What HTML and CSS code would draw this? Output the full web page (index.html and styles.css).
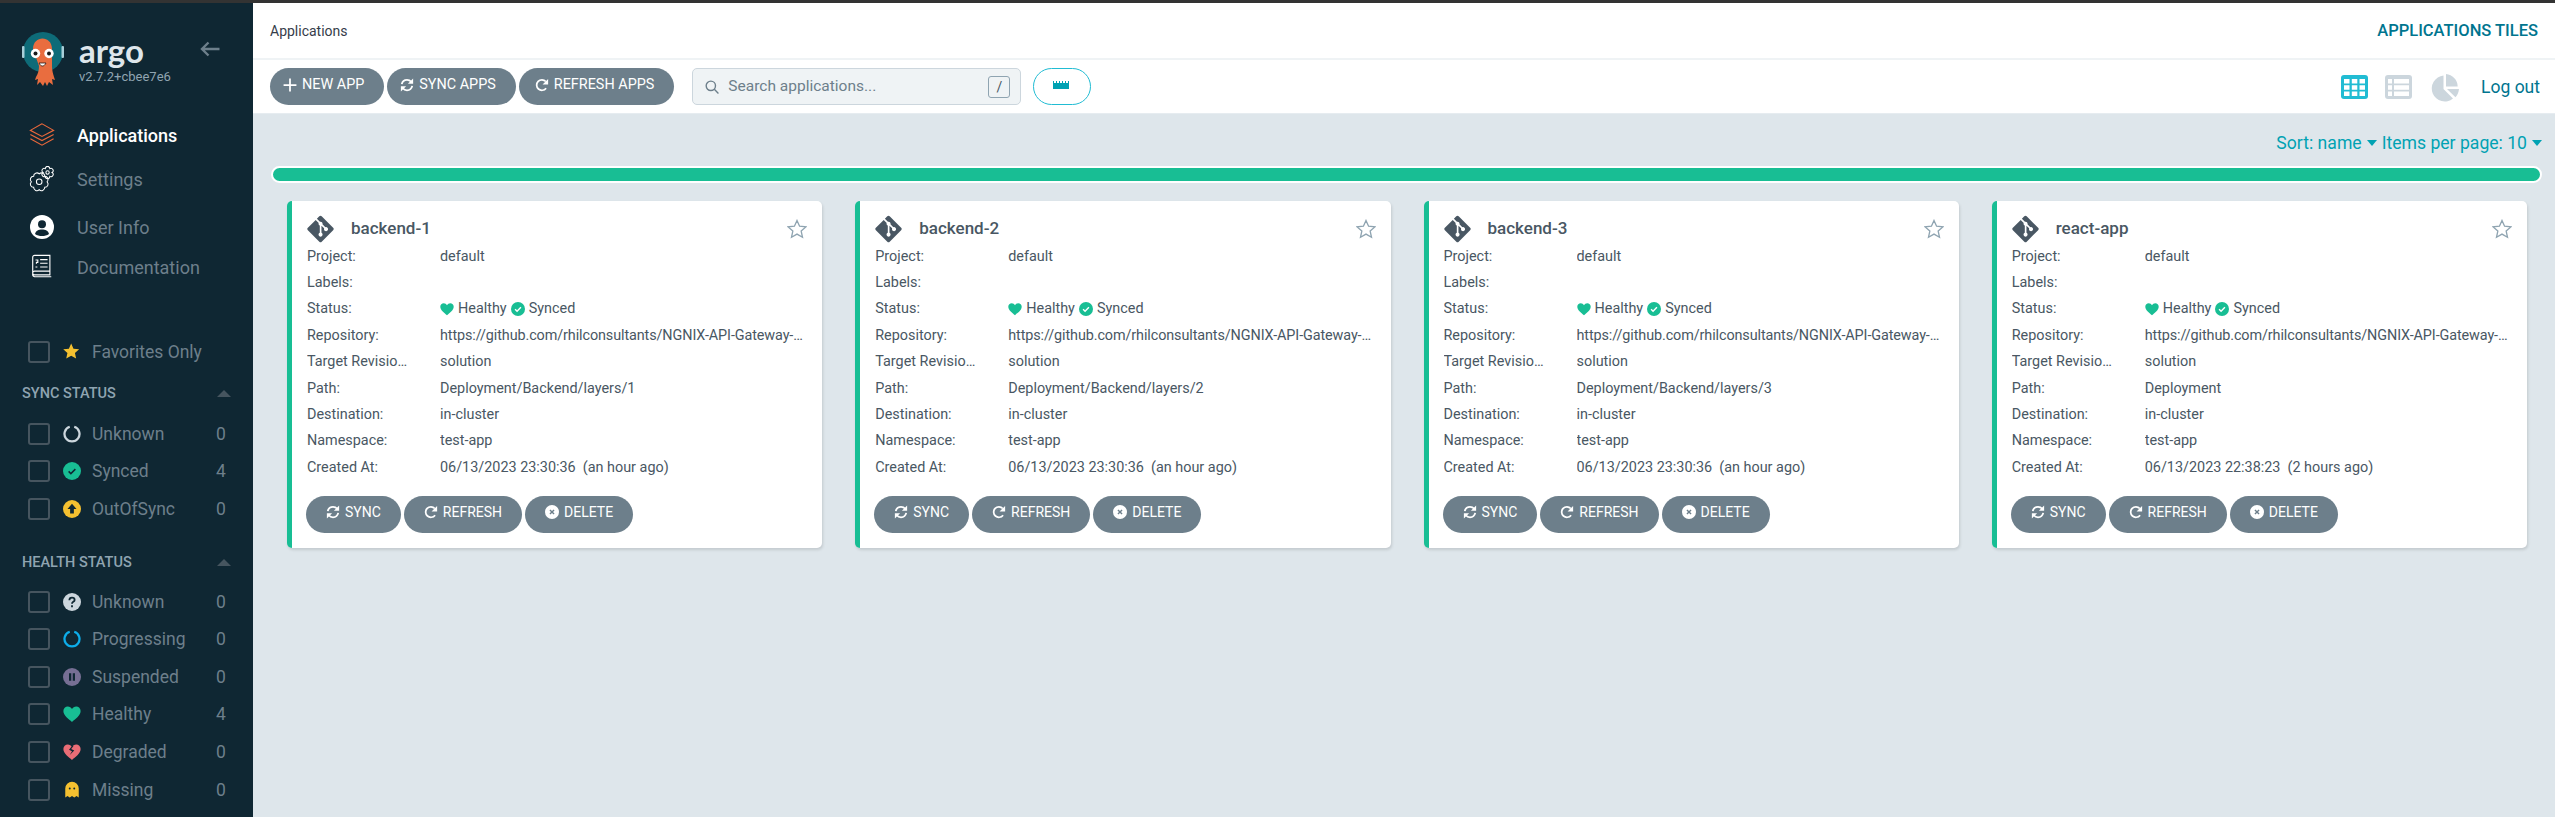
FILE: index.html
```html
<!DOCTYPE html>
<html lang="en">
<head>
    <meta charset="UTF-8">
    <meta name="viewport" content="width=device-width, initial-scale=1.0">
    <title>Applications</title>
    <link rel="stylesheet" href="styles.css">
</head>
<body>

    <svg class="defs" width="0" height="0">
        <symbol id="i-git" viewBox="0 0 448 512"><path d="M439.55 236.05L244 40.45a28.87 28.87 0 0 0-40.81 0l-40.66 40.63 51.52 51.52c27.06-9.14 52.68 16.77 43.39 43.68l49.66 49.66c34.23-11.8 61.18 31 35.47 56.69-26.49 26.49-70.21-2.87-56-37.34L240.22 199v121.85c25.3 12.54 22.26 41.85 9.08 55a34.34 34.34 0 0 1-48.55 0c-17.57-17.6-11.07-46.91 11.25-56v-123c-20.8-8.51-24.6-30.74-18.64-45L142.57 101 8.45 235.14a28.86 28.86 0 0 0 0 40.81l195.61 195.6a28.86 28.86 0 0 0 40.8 0l194.69-194.69a28.86 28.86 0 0 0 0-40.81z"/></symbol>
        <symbol id="i-heart" viewBox="0 0 24 24"><path d="M12 22.5C8 19 .5 14 .5 8 .5 4.5 3.2 2 6.4 2 8.8 2 10.9 3.3 12 5.4 13.100 3.300 15.200 2 17.600 2 20.800 2 23.500 4.500 23.500 8 23.500 14 16 19 12 22.500z"/></symbol>
        <symbol id="i-check" viewBox="0 0 24 24"><circle cx="12" cy="12" r="12"/><path d="M7 12.500l3.400 3.400L17 9" fill="none" stroke="#fff" stroke-width="2.400"/></symbol>
        <symbol id="i-sync" viewBox="0 0 24 24"><g fill="none" stroke="currentColor" stroke-width="3"><path d="M3 10.500C4 6 7.500 3 12 3c3 0 5.500 1.300 7.200 3.500"/><path d="M21 13.500C20 18 16.500 21 12 21c-3 0-5.500-1.300-7.200-3.500"/></g><path fill="currentColor" d="M22.500 1v9h-9zM1.500 23v-9h9z"/></symbol>
        <symbol id="i-redo" viewBox="0 0 24 24"><path fill="none" stroke="currentColor" stroke-width="3" d="M19 17.500A9 9 0 1 1 18.500 6"/><path fill="currentColor" d="M22.500 1.500v9.500h-9.500z"/></symbol>
        <symbol id="i-delete" viewBox="0 0 24 24"><circle cx="12" cy="12" r="12" fill="currentColor"/><path d="M8.500 8.500l7 7M15.500 8.500l-7 7" stroke="#6d7f8b" stroke-width="2.400"/></symbol>
        <symbol id="i-star" viewBox="0 0 24 24"><path d="M12 1.800l3.100 6.900 7.500.8-5.600 5 1.600 7.400-6.600-3.800-6.600 3.800 1.600-7.400-5.600-5 7.500-.8z"/></symbol>
    </svg>

    <div class="topline"></div>

    <div class="layout">
        <aside class="sidebar">
            <div class="brand">
                <svg class="squid" viewBox="0 0 42 56">
                    <circle cx="21" cy="21" r="20" fill="#0e6b78"/>
                    <rect x="0" y="15" width="2.500" height="12" rx="1" fill="#a9cfd9"/>
                    <rect x="39.500" y="15" width="2.500" height="12" rx="1" fill="#a9cfd9"/>
                    <path d="M11 18C11 4 30 4 30 18v17c0 4 1 8 2 11l1 3-3-1 1 6-4-3-2 4-2-4-2 4-3-4-3 3 1-6-3 1 1-3c2-3 3-7 3-11z" fill="#e96d3f"/>
                    <circle cx="13.500" cy="22.500" r="4.700" fill="#fff"/>
                    <circle cx="27" cy="22.500" r="4.700" fill="#fff"/>
                    <circle cx="13.500" cy="22.500" r="2" fill="#1a1a1a"/>
                    <circle cx="27" cy="22.500" r="2" fill="#1a1a1a"/>
                    <path d="M17 32c2 4 5 4 7 0z" fill="#fff" stroke="#2a1a14" stroke-width=".8"/>
                </svg>
                <div class="brand-text">
                    <div class="brand-name">argo</div>
                    <div class="brand-version">v2.7.2+cbee7e6</div>
                </div>
                <svg class="back" viewBox="0 0 20 16"><path d="M19.500 8H2M8.500 1.500L2 8l6.500 6.500" fill="none" stroke="#6d7f8b" stroke-width="2.400"/></svg>
            </div>

            <nav class="nav">
                <div class="nav-item active">
                    <svg class="nav-icon" viewBox="0 0 28 28" fill="none" stroke="#e9683b" stroke-width="1.200"><path d="M14 2L1.500 9 14 15.500 26.500 9zM1.500 13.500L14 20l12.500-6.500M1.500 18L14 25l12.500-7"/></svg>
                    <span>Applications</span>
                </div>
                <div class="nav-item item-settings">
                    <svg class="nav-icon" viewBox="0 0 28 28" fill="none" stroke="#fff" stroke-width="1.100"><path d="M19.500 17A3.500 3.500 0 0 1 17 23 3.500 3.500 0 0 1 11 25.500 3.500 3.500 0 0 1 5 23 3.500 3.500 0 0 1 2.500 17 3.500 3.500 0 0 1 5 11 3.500 3.500 0 0 1 11 8.500 3.500 3.500 0 0 1 17 11 3.500 3.500 0 0 1 19.500 17z"/><circle cx="11" cy="17" r="3"/><path d="M24.800 7A2.200 2.200 0 0 1 22.400 11.200 2.200 2.200 0 0 1 17.600 11.200 2.200 2.200 0 0 1 15.200 7 2.200 2.200 0 0 1 17.600 2.800 2.200 2.200 0 0 1 22.400 2.800 2.200 2.200 0 0 1 24.800 7z"/><circle cx="20" cy="7" r="1.800"/></svg>
                    <span>Settings</span>
                </div>
                <div class="nav-item item-user">
                    <svg class="nav-icon" viewBox="-1 -1 26 26"><circle cx="12" cy="12" r="12" fill="#fff"/><circle cx="12" cy="9.300" r="4" fill="#0f2733"/><path d="M5 19c1-3.500 3.500-4.500 7-4.500s6 1 7 4.500c-2 1.500-4.500 2-7 2s-5-.5-7-2z" fill="#0f2733"/></svg>
                    <span>User Info</span>
                </div>
                <div class="nav-item item-docs">
                    <svg class="nav-icon" viewBox="-2 0 28 28" fill="none" stroke="#fff" stroke-width="1.200"><path d="M4 1.500h16.500v21H4a2 2 0 0 1-2-2V3.500a2 2 0 0 1 2-2zM2 20.500a2 2 0 0 1 2-2h16.500M2 21a3 3 0 0 0 2 3.500h18M10 6h8M10 10h8M10 14h8M5 14h2M5 6.500h2.500V9H6v1.500"/></svg>
                    <span>Documentation</span>
                </div>
            </nav>

            <div class="favorites">
                <span class="box"></span>
                <svg class="flag" viewBox="1 1 22 22" fill="#f4c030"><use href="#i-star"/></svg>
                <span class="filter-label">Favorites Only</span>
            </div>

            <div class="filter-head sync-head"><span>SYNC STATUS</span><i class="caret"></i></div>
            <div class="filter-group sync-group">
                <div class="filter">
                    <span class="box"></span>
                    <svg class="flag" viewBox="0 0 24 24"><path d="M15 2.400A10 10 0 1 1 9 2.400" fill="none" stroke="#ccd6dd" stroke-width="3"/></svg>
                    <span class="filter-label">Unknown</span><span class="count">0</span>
                </div>
                <div class="filter">
                    <span class="box"></span>
                    <svg class="flag flag-check" viewBox="0 0 24 24" fill="#18be94"><circle cx="12" cy="12" r="12"/><path d="M7.500 12.500l3 3L16.500 9.500" fill="none" stroke="#0f2733" stroke-width="2"/></svg>
                    <span class="filter-label">Synced</span><span class="count">4</span>
                </div>
                <div class="filter">
                    <span class="box"></span>
                    <svg class="flag" viewBox="0 0 24 24"><circle cx="12" cy="12" r="12" fill="#f4c030"/><path d="M12 5l6 7h-3.500v6h-5v-6H6z" fill="#0f2733"/></svg>
                    <span class="filter-label">OutOfSync</span><span class="count">0</span>
                </div>
            </div>

            <div class="filter-head health-head"><span>HEALTH STATUS</span><i class="caret"></i></div>
            <div class="filter-group health-group">
                <div class="filter">
                    <span class="box"></span>
                    <svg class="flag" viewBox="0 0 24 24"><circle cx="12" cy="12" r="12" fill="#ccd6dd"/><path d="M8.500 9.500c0-2 1.500-3.300 3.500-3.300s3.500 1.200 3.500 3c0 2.600-3.500 2.500-3.500 5M12 16.200v2.800" fill="none" stroke="#0f2733" stroke-width="2.400"/></svg>
                    <span class="filter-label">Unknown</span><span class="count">0</span>
                </div>
                <div class="filter">
                    <span class="box"></span>
                    <svg class="flag" viewBox="0 0 24 24"><path d="M15 2.400A10 10 0 1 1 9 2.400" fill="none" stroke="#0dadea" stroke-width="3"/></svg>
                    <span class="filter-label">Progressing</span><span class="count">0</span>
                </div>
                <div class="filter">
                    <span class="box"></span>
                    <svg class="flag" viewBox="0 0 24 24"><circle cx="12" cy="12" r="12" fill="#766f94"/><path d="M8 7h3v10H8zM13 7h3v10h-3z" fill="#0f2733"/></svg>
                    <span class="filter-label">Suspended</span><span class="count">0</span>
                </div>
                <div class="filter">
                    <span class="box"></span>
                    <svg class="flag" viewBox="0 0 24 24" fill="#18be94"><use href="#i-heart"/></svg>
                    <span class="filter-label">Healthy</span><span class="count">4</span>
                </div>
                <div class="filter">
                    <span class="box"></span>
                    <svg class="flag" viewBox="0 0 24 24"><use href="#i-heart" fill="#e96d76"/><path d="M12 4l-4 5 4 2-3 5 6-6-4-2 3-4z" fill="#0f2733"/></svg>
                    <span class="filter-label">Degraded</span><span class="count">0</span>
                </div>
                <div class="filter">
                    <span class="box"></span>
                    <svg class="flag" viewBox="0 0 24 24"><path d="M3 22V10a9 9 0 0 1 18 0v12l-3-2-3 2-3-2-3 2-3-2z" fill="#f4c030"/><circle cx="9" cy="10" r="1.300" fill="#0f2733"/><circle cx="15" cy="10" r="1.300" fill="#0f2733"/></svg>
                    <span class="filter-label">Missing</span><span class="count">0</span>
                </div>
            </div>
        </aside>

        <main class="main">
            <header class="top-bar">
                <div class="crumb">Applications</div>
                <div class="page-title">APPLICATIONS TILES</div>
            </header>

            <div class="toolbar">
                <button class="btn btn-plus">
                    <svg class="btn-icon" viewBox="0 0 24 24"><path d="M12 1v22M1 12h22" stroke="currentColor" stroke-width="3"/></svg>NEW APP
                </button>
                <button class="btn btn-sync"><svg class="btn-icon"><use href="#i-sync"/></svg>SYNC APPS</button>
                <button class="btn btn-refresh"><svg class="btn-icon"><use href="#i-redo"/></svg>REFRESH APPS</button>
                <div class="search">
                    <svg class="search-icon" viewBox="0 0 24 24"><circle cx="10" cy="10" r="8" fill="none" stroke="#6d7f8b" stroke-width="2.400"/><path d="M16 16l7 7" stroke="#6d7f8b" stroke-width="2.400"/></svg>
                    <span class="search-text">Search applications...</span>
                    <span class="key">/</span>
                </div>
                <button class="filter-toggle"><svg class="ruler" viewBox="0 0 18 8"><path d="M0 0h1v2h2V0h1v2h2V0h1v2h2V0h1v2h2V0h1v2h2V0h1v8H0z" fill="#00a2b3"/></svg></button>

                <div class="views">
                    <svg class="view" viewBox="0 0 27 24"><rect width="27" height="24" rx="3" fill="#21bcd3"/><path d="M3 4h5.500v4.500H3zM10.800 4h5.500v4.500h-5.500zM18.500 4H24v4.500h-5.500zM3 10.200h5.500v4.500H3zM10.800 10.200h5.500v4.500h-5.500zM18.500 10.200H24v4.500h-5.500zM3 16.500h5.500V21H3zM10.800 16.500h5.500V21h-5.500zM18.500 16.500H24V21h-5.500z" fill="#fff"/></svg>
                    <svg class="view" viewBox="0 0 27 24"><rect width="27" height="24" rx="3" fill="#ccd6dd"/><path d="M3 4h4v4.500H3zM9 4h15v4.500H9zM3 10.200h4v4.500H3zM9 10.200h15v4.500H9zM3 16.500h4V21H3zM9 16.500h15V21H9z" fill="#fff"/></svg>
                    <svg class="view-pie" viewBox="0 0 28 28"><path d="M12.500 1.500v13.500l9.500 9.500A13 13 0 1 1 12.500 1.500z" fill="#ccd6dd"/><path d="M15 0a13 13 0 0 1 11.700 12.500H15z" fill="#ccd6dd"/><path d="M16 15h12c-.3 3-1.500 6-3.500 8.300z" fill="#ccd6dd"/></svg>
                    <span class="logout">Log out</span>
                </div>
            </div>

            <section class="content">
                <div class="sort-row">
                    <span>Sort: name</span><i class="down"></i>
                    <span class="per-page">Items per page: 10</span><i class="down"></i>
                </div>
                <div class="progress"></div>

                <div class="cards">
                    <article class="card">
                        <div class="card-head">
                            <svg class="git"><use href="#i-git"/></svg>
                            <span class="card-name">backend-1</span>
                            <svg class="fav"><use href="#i-star"/></svg>
                        </div>
                        <div class="row"><span>Project:</span><span>default</span></div>
                        <div class="row"><span>Labels:</span><span></span></div>
                        <div class="row"><span>Status:</span><span class="status"><svg class="s-icon"><use href="#i-heart"/></svg>Healthy<svg class="s-icon"><use href="#i-check"/></svg>Synced</span></div>
                        <div class="row"><span>Repository:</span><span class="repo">https://github.com/rhilconsultants/NGNIX-API-Gateway-Lab.git</span></div>
                        <div class="row"><span>Target Revision:</span><span>solution</span></div>
                        <div class="row"><span>Path:</span><span>Deployment/Backend/layers/1</span></div>
                        <div class="row"><span>Destination:</span><span>in-cluster</span></div>
                        <div class="row"><span>Namespace:</span><span>test-app</span></div>
                        <div class="row"><span>Created At:</span><span class="pre">06/13/2023 23:30:36  (an hour ago)</span></div>
                        <div class="card-actions">
                            <button class="btn"><svg class="btn-icon"><use href="#i-sync"/></svg>SYNC</button>
                            <button class="btn"><svg class="btn-icon"><use href="#i-redo"/></svg>REFRESH</button>
                            <button class="btn"><svg class="btn-icon"><use href="#i-delete"/></svg>DELETE</button>
                        </div>
                    </article>

                    <article class="card">
                        <div class="card-head">
                            <svg class="git"><use href="#i-git"/></svg>
                            <span class="card-name">backend-2</span>
                            <svg class="fav"><use href="#i-star"/></svg>
                        </div>
                        <div class="row"><span>Project:</span><span>default</span></div>
                        <div class="row"><span>Labels:</span><span></span></div>
                        <div class="row"><span>Status:</span><span class="status"><svg class="s-icon"><use href="#i-heart"/></svg>Healthy<svg class="s-icon"><use href="#i-check"/></svg>Synced</span></div>
                        <div class="row"><span>Repository:</span><span class="repo">https://github.com/rhilconsultants/NGNIX-API-Gateway-Lab.git</span></div>
                        <div class="row"><span>Target Revision:</span><span>solution</span></div>
                        <div class="row"><span>Path:</span><span>Deployment/Backend/layers/2</span></div>
                        <div class="row"><span>Destination:</span><span>in-cluster</span></div>
                        <div class="row"><span>Namespace:</span><span>test-app</span></div>
                        <div class="row"><span>Created At:</span><span class="pre">06/13/2023 23:30:36  (an hour ago)</span></div>
                        <div class="card-actions">
                            <button class="btn"><svg class="btn-icon"><use href="#i-sync"/></svg>SYNC</button>
                            <button class="btn"><svg class="btn-icon"><use href="#i-redo"/></svg>REFRESH</button>
                            <button class="btn"><svg class="btn-icon"><use href="#i-delete"/></svg>DELETE</button>
                        </div>
                    </article>

                    <article class="card">
                        <div class="card-head">
                            <svg class="git"><use href="#i-git"/></svg>
                            <span class="card-name">backend-3</span>
                            <svg class="fav"><use href="#i-star"/></svg>
                        </div>
                        <div class="row"><span>Project:</span><span>default</span></div>
                        <div class="row"><span>Labels:</span><span></span></div>
                        <div class="row"><span>Status:</span><span class="status"><svg class="s-icon"><use href="#i-heart"/></svg>Healthy<svg class="s-icon"><use href="#i-check"/></svg>Synced</span></div>
                        <div class="row"><span>Repository:</span><span class="repo">https://github.com/rhilconsultants/NGNIX-API-Gateway-Lab.git</span></div>
                        <div class="row"><span>Target Revision:</span><span>solution</span></div>
                        <div class="row"><span>Path:</span><span>Deployment/Backend/layers/3</span></div>
                        <div class="row"><span>Destination:</span><span>in-cluster</span></div>
                        <div class="row"><span>Namespace:</span><span>test-app</span></div>
                        <div class="row"><span>Created At:</span><span class="pre">06/13/2023 23:30:36  (an hour ago)</span></div>
                        <div class="card-actions">
                            <button class="btn"><svg class="btn-icon"><use href="#i-sync"/></svg>SYNC</button>
                            <button class="btn"><svg class="btn-icon"><use href="#i-redo"/></svg>REFRESH</button>
                            <button class="btn"><svg class="btn-icon"><use href="#i-delete"/></svg>DELETE</button>
                        </div>
                    </article>

                    <article class="card">
                        <div class="card-head">
                            <svg class="git"><use href="#i-git"/></svg>
                            <span class="card-name">react-app</span>
                            <svg class="fav"><use href="#i-star"/></svg>
                        </div>
                        <div class="row"><span>Project:</span><span>default</span></div>
                        <div class="row"><span>Labels:</span><span></span></div>
                        <div class="row"><span>Status:</span><span class="status"><svg class="s-icon"><use href="#i-heart"/></svg>Healthy<svg class="s-icon"><use href="#i-check"/></svg>Synced</span></div>
                        <div class="row"><span>Repository:</span><span class="repo">https://github.com/rhilconsultants/NGNIX-API-Gateway-Lab.git</span></div>
                        <div class="row"><span>Target Revision:</span><span>solution</span></div>
                        <div class="row"><span>Path:</span><span>Deployment</span></div>
                        <div class="row"><span>Destination:</span><span>in-cluster</span></div>
                        <div class="row"><span>Namespace:</span><span>test-app</span></div>
                        <div class="row"><span>Created At:</span><span class="pre">06/13/2023 22:38:23  (2 hours ago)</span></div>
                        <div class="card-actions">
                            <button class="btn"><svg class="btn-icon"><use href="#i-sync"/></svg>SYNC</button>
                            <button class="btn"><svg class="btn-icon"><use href="#i-redo"/></svg>REFRESH</button>
                            <button class="btn"><svg class="btn-icon"><use href="#i-delete"/></svg>DELETE</button>
                        </div>
                    </article>
                </div>
            </section>
        </main>
    </div>

</body>
</html>
```

FILE: styles.css
```css
* {
    box-sizing: border-box;
}
html, body {
    height: 817px;
    margin: 0;
    overflow: hidden;
}
body {
    font-family: Roboto, Arial, sans-serif;
    background: #dee6eb;
    color: #495763;
}
.defs {
    display: block;
    height: 0;
}
.topline {
    height: 3px;
    background: #333;
}
.layout {
    display: flex;
    height: 814px;
}

/* sidebar */
.sidebar {
    width: 253px;
    flex: none;
    background: #0f2733;
    color: #6d7f8b;
}
.brand {
    display: flex;
    height: 88px;
    padding: 28px 0 0 22px;
}
.squid {
    width: 42px;
    height: 56px;
}
.brand-text {
    margin-left: 15px;
    width: 94px;
}
.brand-name {
    font-family: Lato, Roboto, sans-serif;
    font-size: 33px;
    font-weight: 700;
    line-height: 32px;
    color: #dee6eb;
    margin-top: 3px;
}
.brand-version {
    font-size: 13px;
    line-height: 16px;
    margin-top: 3px;
    color: #8fa4b1;
    white-space: nowrap;
}
.back {
    width: 20px;
    height: 16px;
    margin: 10px 0 0 27px;
}
.nav {
    margin-top: 22px;
}
.nav-item {
    display: flex;
    align-items: center;
    height: 44px;
    padding-left: 29px;
    font-size: 18px;
}
.nav-item span {
    margin-left: 22px;
}
.nav-item.active {
    color: #fff;
    font-weight: 500;
}
.nav-item.item-user {
    height: 52px;
}
.nav-item.item-docs {
    height: 28px;
}
.nav-icon {
    width: 26px;
    height: 26px;
    flex: none;
}
.favorites {
    display: flex;
    align-items: center;
    height: 26px;
    margin-top: 58px;
    padding-left: 28px;
}
.box {
    width: 22px;
    height: 22px;
    flex: none;
    border: 2px solid #46555f;
    border-radius: 3px;
}
.flag {
    width: 18px;
    height: 18px;
    flex: none;
    margin-left: 13px;
}
.filter-label {
    margin-left: 11px;
    font-size: 17.500px;
    flex: 1;
}
.count {
    width: 37px;
    font-size: 17.500px;
}
.filter-head {
    display: flex;
    justify-content: space-between;
    align-items: center;
    height: 24px;
    padding: 0 22px 0 22px;
    font-size: 14.500px;
    font-weight: 500;
    color: #8fa4b1;
}
.sync-head {
    margin-top: 16px;
}
.health-head {
    margin-top: 23px;
}
.caret {
    width: 0;
    height: 0;
    border-left: 7px solid transparent;
    border-right: 7px solid transparent;
    border-bottom: 7px solid #46555f;
}
.sync-group {
    margin-top: 10px;
}
.health-group {
    margin-top: 8px;
}
.filter {
    display: flex;
    align-items: center;
    height: 37.600px;
    padding-left: 28px;
}

/* header and toolbar */
.main {
    flex: 1;
    min-width: 0;
}
.top-bar {
    display: flex;
    justify-content: space-between;
    align-items: center;
    height: 57px;
    padding: 0 17px;
    background: #fff;
    border-bottom: 2px solid #eff3f5;
}
.crumb {
    font-size: 14px;
    color: #363c4a;
}
.page-title {
    font-size: 16.500px;
    font-weight: 500;
    color: #00758f;
}
.toolbar {
    display: flex;
    align-items: center;
    height: 54px;
    padding: 0 15px 0 17px;
    background: #fff;
    border-bottom: 1px solid #e6ecf0;
}
.btn {
    display: inline-flex;
    align-items: center;
    height: 37px;
    padding: 0 20px 4px;
    border: 0;
    border-radius: 19px;
    background: #6d7f8b;
    color: #fff;
    font-family: Roboto, Arial, sans-serif;
    font-size: 14px;
    white-space: nowrap;
}
.btn-icon {
    width: 14px;
    height: 14px;
    margin-right: 5px;
    fill: currentColor;
}
.toolbar .btn {
    margin-right: 3px;
    font-size: 14.400px;
}
.btn-plus, .btn-sync {
    padding-left: 13px;
}
.btn-refresh {
    padding-left: 16px;
}
.search {
    display: flex;
    align-items: center;
    width: 329px;
    height: 37px;
    margin-left: 15px;
    padding: 0 10px 0 12px;
    background: #eff3f5;
    border: 1px solid #ccd6dd;
    border-radius: 5px;
}
.search-icon {
    width: 14px;
    height: 14px;
    flex: none;
}
.search-text {
    flex: 1;
    margin-left: 9px;
    padding-bottom: 2px;
    font-size: 15.500px;
    color: #6d7f8b;
}
.key {
    width: 22px;
    height: 22px;
    border: 1px solid #8fa4b1;
    border-radius: 3px;
    font-size: 14px;
    line-height: 20px;
    text-align: center;
    color: #495763;
}
.filter-toggle {
    display: flex;
    align-items: center;
    justify-content: center;
    width: 58px;
    height: 37px;
    margin-left: 12px;
    background: #fff;
    border: 1px solid #21bcd3;
    border-radius: 19px;
}
.ruler {
    width: 18px;
    height: 8px;
    margin-top: -4px;
}
.views {
    display: flex;
    align-items: center;
    margin-left: auto;
}
.view {
    width: 27px;
    height: 24px;
    margin-right: 17px;
}
.view-pie {
    width: 28px;
    height: 28px;
    margin: 3px 22px 0 2px;
}
.logout {
    font-size: 17.500px;
    color: #00758f;
}

/* content */
.content {
    padding: 17px 13px 0 18px;
}
.sort-row {
    display: flex;
    justify-content: flex-end;
    align-items: center;
    height: 24px;
    font-size: 17.600px;
    color: #00a2b3;
}
.per-page {
    margin-left: 5px;
}
.down {
    width: 0;
    height: 0;
    margin-left: 5px;
    border-left: 5.500px solid transparent;
    border-right: 5.500px solid transparent;
    border-top: 6px solid #00a2b3;
}
.progress {
    height: 17px;
    margin-top: 11px;
    background: #18be94;
    border: 2.500px solid #fff;
    border-radius: 9px;
}
.cards {
    display: grid;
    grid-template-columns: repeat(4, 1fr);
    gap: 33px;
    margin: 18px 15px 0 16px;
}
.card {
    height: 347px;
    padding: 14px 15px 0 15px;
    background: #fff;
    border-left: 5px solid #18be94;
    border-radius: 5px;
    box-shadow: 1px 2px 3px rgba(0, 0, 0, .12);
}
.card-head {
    display: flex;
    align-items: center;
    height: 27px;
    margin-bottom: 1px;
}
.git {
    width: 27px;
    height: 30px;
    flex: none;
    fill: #495763;
}
.card-name {
    flex: 1;
    margin-left: 17px;
    padding-bottom: 2px;
    font-size: 17px;
    font-weight: 500;
}
.fav {
    width: 20px;
    height: 20px;
    fill: none;
    stroke: #8fa4b1;
    stroke-width: 1.600px;
}
.row {
    display: grid;
    grid-template-columns: 133px minmax(0, 1fr);
    align-items: center;
    height: 26.400px;
    font-size: 14.400px;
}
.row span {
    white-space: nowrap;
    overflow: hidden;
    text-overflow: ellipsis;
}
.row span:first-child {
    padding-right: 32px;
}
.row .pre {
    white-space: pre;
}
.row .repo {
    letter-spacing: -.1px;
}
.status {
    display: flex;
    align-items: center;
}
.s-icon {
    width: 14px;
    height: 14px;
    margin-right: 4px;
    fill: #18be94;
}
.s-icon:not(:first-child) {
    margin-left: 4px;
}
.card-actions {
    display: flex;
    gap: 3px;
    margin: 15px 0 0 -1px;
}
```
